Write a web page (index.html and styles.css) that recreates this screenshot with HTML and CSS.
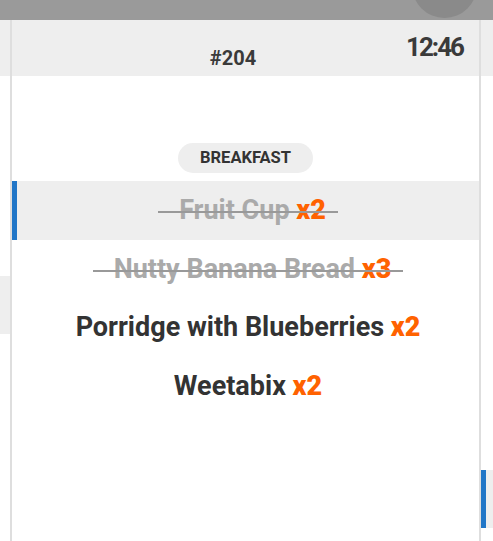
FILE: index.html
```html
<!DOCTYPE html>
<html lang="en">
<head>
    <meta charset="UTF-8">
    <meta name="viewport" content="width=device-width, initial-scale=1.0">
    <title>Kitchen Display</title>
    <link rel="stylesheet" href="styles.css">
</head>
<body>
<div class="topbar">
    <span class="ripple"></span>
</div>

<div class="board">
    <div class="ticket ticket-prev">
        <div class="ticket-head"></div>
        <div class="ticket-body">
            <div class="spacer-prev"></div>
            <div class="item active"></div>
        </div>
    </div>

    <div class="ticket">
        <div class="ticket-head">
            <span class="num">#204</span>
            <span class="time">12:46</span>
        </div>
        <div class="ticket-body">
            <div class="course"><span class="pill">Breakfast</span></div>
            <div class="item active done"><span class="label">Fruit Cup <b class="qty">x2</b></span></div>
            <div class="item done"><span class="label">Nutty Banana Bread <b class="qty">x3</b></span></div>
            <div class="item"><span class="label">Porridge with Blueberries <b class="qty">x2</b></span></div>
            <div class="item"><span class="label">Weetabix <b class="qty">x2</b></span></div>
        </div>
    </div>

    <div class="ticket ticket-next">
        <div class="ticket-head"></div>
        <div class="ticket-body">
            <div class="spacer-next"></div>
            <div class="item active"></div>
        </div>
    </div>
</div>
</body>
</html>
```

FILE: styles.css
```css
body {
    margin: 0;
    font-family: Roboto, 'Liberation Sans', sans-serif;
    background: #fff;
    width: 493px;
    height: 541px;
    overflow: hidden;
}

.topbar {
    height: 20px;
    background-color: #9a9a9a;
    position: relative;
    overflow: hidden;
}

.ripple {
    position: absolute;
    left: 412px;
    top: -47px;
    width: 65px;
    height: 65px;
    border-radius: 50%;
    background-color: #8a8a8a;
}

.board {
    display: flex;
    height: 521px;
    overflow: hidden;
}

.ticket {
    flex: 0 0 467px;
    border-right: 2px solid #dedede;
}

.ticket-prev {
    margin-left: -457px;
}

.ticket-head {
    height: 56px;
    background-color: #eeeeee;
    display: flex;
    padding: 0 16px 0 48px;
    color: #3a3a3a;
    font-weight: bold;
}

.num {
    flex: 1;
    text-align: center;
    align-self: flex-end;
    font-size: 20px;
    padding-bottom: 6px;
}

.time {
    font-size: 26px;
    padding-top: 12px;
    letter-spacing: -2px;
}

.course {
    display: flex;
    justify-content: center;
    padding: 67px 0 8px;
}

.pill {
    background-color: #eeeeee;
    border-radius: 15px;
    height: 30px;
    line-height: 30px;
    width: 135px;
    text-align: center;
    font-size: 16.5px;
    font-weight: bold;
    color: #333;
    text-transform: uppercase;
}

.item {
    height: 58.5px;
    display: flex;
    justify-content: center;
    align-items: center;
    border-left: 5px solid transparent;
    font-size: 27px;
    font-weight: bold;
    color: #333;
}

.item.active {
    background-color: #eeeeee;
    border-left-color: #2176c7;
}

.qty {
    color: #ff6200;
}

.item.done .label {
    color: #aaaaaa;
    position: relative;
    padding: 0 12px 0 21px;
}

.item.done .label::after {
    content: '';
    position: absolute;
    left: 0;
    right: 0;
    top: 53%;
    height: 2px;
    background-color: #999;
}

.spacer-prev {
    height: 200px;
}

.spacer-next {
    height: 394px;
}

.ticket-prev .item,
.ticket-next .item {
    height: 58px;
}
```
